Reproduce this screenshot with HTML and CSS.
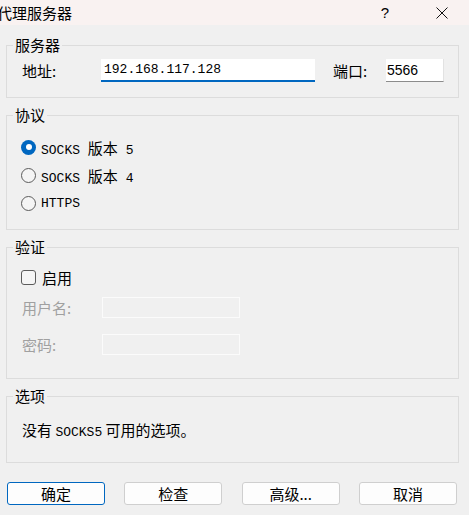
FILE: index.html
```html
<!DOCTYPE html>
<html lang="zh-CN">
<head>
  <meta charset="UTF-8" />
  <title>代理服务器</title>
  <link rel="stylesheet" href="styles.css">
</head>
<body>
  <div class="titlebar">
    <span class="title">代理服务器</span>
    <span class="help">?</span>
    <svg class="close" viewBox="0 0 12 12"><path d="M0.5 0.5L11.5 11.5M11.5 0.5L0.5 11.5" stroke="#111" stroke-width="1"/></svg>
  </div>

  <div class="dialog">
    <fieldset class="group server">
      <legend>服务器</legend>
      <div class="body row">
        <span class="label addr-label">地址:</span>
        <div class="input addr">192.168.117.128</div>
        <span class="label port-label">端口:</span>
        <div class="input port">5566</div>
      </div>
    </fieldset>

    <fieldset class="group proto">
      <legend>协议</legend>
      <div class="body">
        <div class="radio-row">
          <span class="radio checked"></span>
          <span class="mono">SOCKS <span class="zh">版本</span> 5</span>
        </div>
        <div class="radio-row">
          <span class="radio"></span>
          <span class="mono">SOCKS <span class="zh">版本</span> 4</span>
        </div>
        <div class="radio-row">
          <span class="radio"></span>
          <span class="mono">HTTPS</span>
        </div>
      </div>
    </fieldset>

    <fieldset class="group auth">
      <legend>验证</legend>
      <div class="body">
        <div class="check-row">
          <span class="checkbox"></span>
          <span>启用</span>
        </div>
        <div class="field-row user">
          <span class="label disabled">用户名:</span>
          <div class="input off"></div>
        </div>
        <div class="field-row pass">
          <span class="label disabled">密码:</span>
          <div class="input off"></div>
        </div>
      </div>
    </fieldset>

    <fieldset class="group opts">
      <legend>选项</legend>
      <div class="body">
        <div class="note">没有 <span class="mono">SOCKS5</span> 可用的选项。</div>
      </div>
    </fieldset>

    <div class="buttons">
      <div class="btn default">确定</div>
      <div class="btn">检查</div>
      <div class="btn">高级...</div>
      <div class="btn">取消</div>
    </div>
  </div>
</body>
</html>
```

FILE: styles.css
```css
body {
  margin: 0;
  background: #f0f0f0;
  color: #000;
  font-family: "Noto Sans CJK SC", "Liberation Sans", sans-serif;
  font-size: 15px;
  overflow: hidden;
}

.titlebar {
  height: 25px;
  background: #f9f2f1;
  display: flex;
  align-items: center;
}

.title {
  margin-left: -3px;
  font-size: 15px;
  line-height: 25px;
  flex: 1;
}

.help {
  font-family: "Liberation Sans", sans-serif;
  font-size: 15px;
  margin-right: 47px;
}

.close {
  width: 12px;
  height: 12px;
  margin-right: 21px;
}

.dialog {
  padding: 11px 10px 0 6px;
}

.group {
  margin: 0;
  border: 1px solid #dcdcdc;
  padding: 0 6px;
  min-width: 0;
}

.group + .group {
  margin-top: 8px;
}

.group legend {
  padding: 0 2px;
  font-size: 15px;
  line-height: 18px;
}

.body {
  padding-left: 9px;
}

/* server */
.server .body {
  padding-top: 5px;
  padding-bottom: 15px;
}

.row {
  display: flex;
  align-items: center;
  height: 23px;
}

.addr-label {
  width: 79px;
}

.input {
  height: 23px;
  box-sizing: border-box;
  background: #fff;
  font-family: "Liberation Mono", monospace;
  font-size: 13px;
  line-height: 22px;
  padding-left: 3px;
}

.addr {
  width: 214px;
  border-bottom: 2px solid #0067c0;
}

.port-label {
  margin-left: 18px;
  width: 53px;
}

.port {
  width: 58px;
  font-family: "Liberation Sans", sans-serif;
  font-size: 14px;
  padding-left: 1px;
  border-bottom: 1px solid #8c8c8c;
  border-right: 1px solid #e2e2e2;
}

/* protocol */
.proto .body {
  padding-top: 9px;
  padding-bottom: 12px;
  padding-left: 8px;
}

.radio-row {
  display: flex;
  align-items: center;
  height: 28px;
}

.radio {
  width: 15px;
  height: 15px;
  box-sizing: border-box;
  border-radius: 50%;
  border: 1px solid #5c5c5c;
  background: #f5f5f5;
  margin-right: 5px;
  display: flex;
  align-items: center;
  justify-content: center;
}

.radio.checked {
  border: none;
  background: #0067c0;
}

.radio.checked::after {
  content: "";
  width: 6px;
  height: 6px;
  border-radius: 50%;
  background: #fff;
}

.mono {
  font-family: "Liberation Mono", "Noto Sans CJK SC", monospace;
  font-size: 13px;
}

.mono .zh {
  font-family: "Noto Sans CJK SC", sans-serif;
  font-size: 15px;
}

/* auth */
.auth .body {
  padding-top: 7px;
  padding-bottom: 23px;
}

.check-row {
  display: flex;
  align-items: center;
  height: 28px;
  margin-left: -1px;
}

.checkbox {
  width: 15px;
  height: 15px;
  box-sizing: border-box;
  border: 1px solid #5c5c5c;
  border-radius: 3px;
  background: #f5f5f5;
  margin-right: 6px;
}

.field-row {
  display: flex;
  align-items: center;
  height: 21px;
}

.field-row.user {
  margin-top: 6px;
}

.field-row.pass {
  margin-top: 16px;
}

.field-row .label {
  width: 80px;
}

.disabled {
  color: #a0a0a0;
}

.input.off {
  width: 138px;
  height: 21px;
  background: #f0f0f0;
  border: 1px solid #fbfbfb;
}

/* options */
.opts .body {
  padding-top: 16px;
  padding-bottom: 20px;
}

.note {
  line-height: 18px;
}

/* buttons */
.buttons {
  margin-top: 19px;
  display: flex;
  justify-content: space-between;
  padding: 0 2px 0 1px;
}

.btn {
  width: 98px;
  height: 23px;
  box-sizing: border-box;
  border: 1px solid #cfcfcf;
  border-radius: 3px;
  background: #fdfdfd;
  text-align: center;
  line-height: 21px;
  font-size: 15px;
}

.btn.default {
  border-color: #0067c0;
}
```
